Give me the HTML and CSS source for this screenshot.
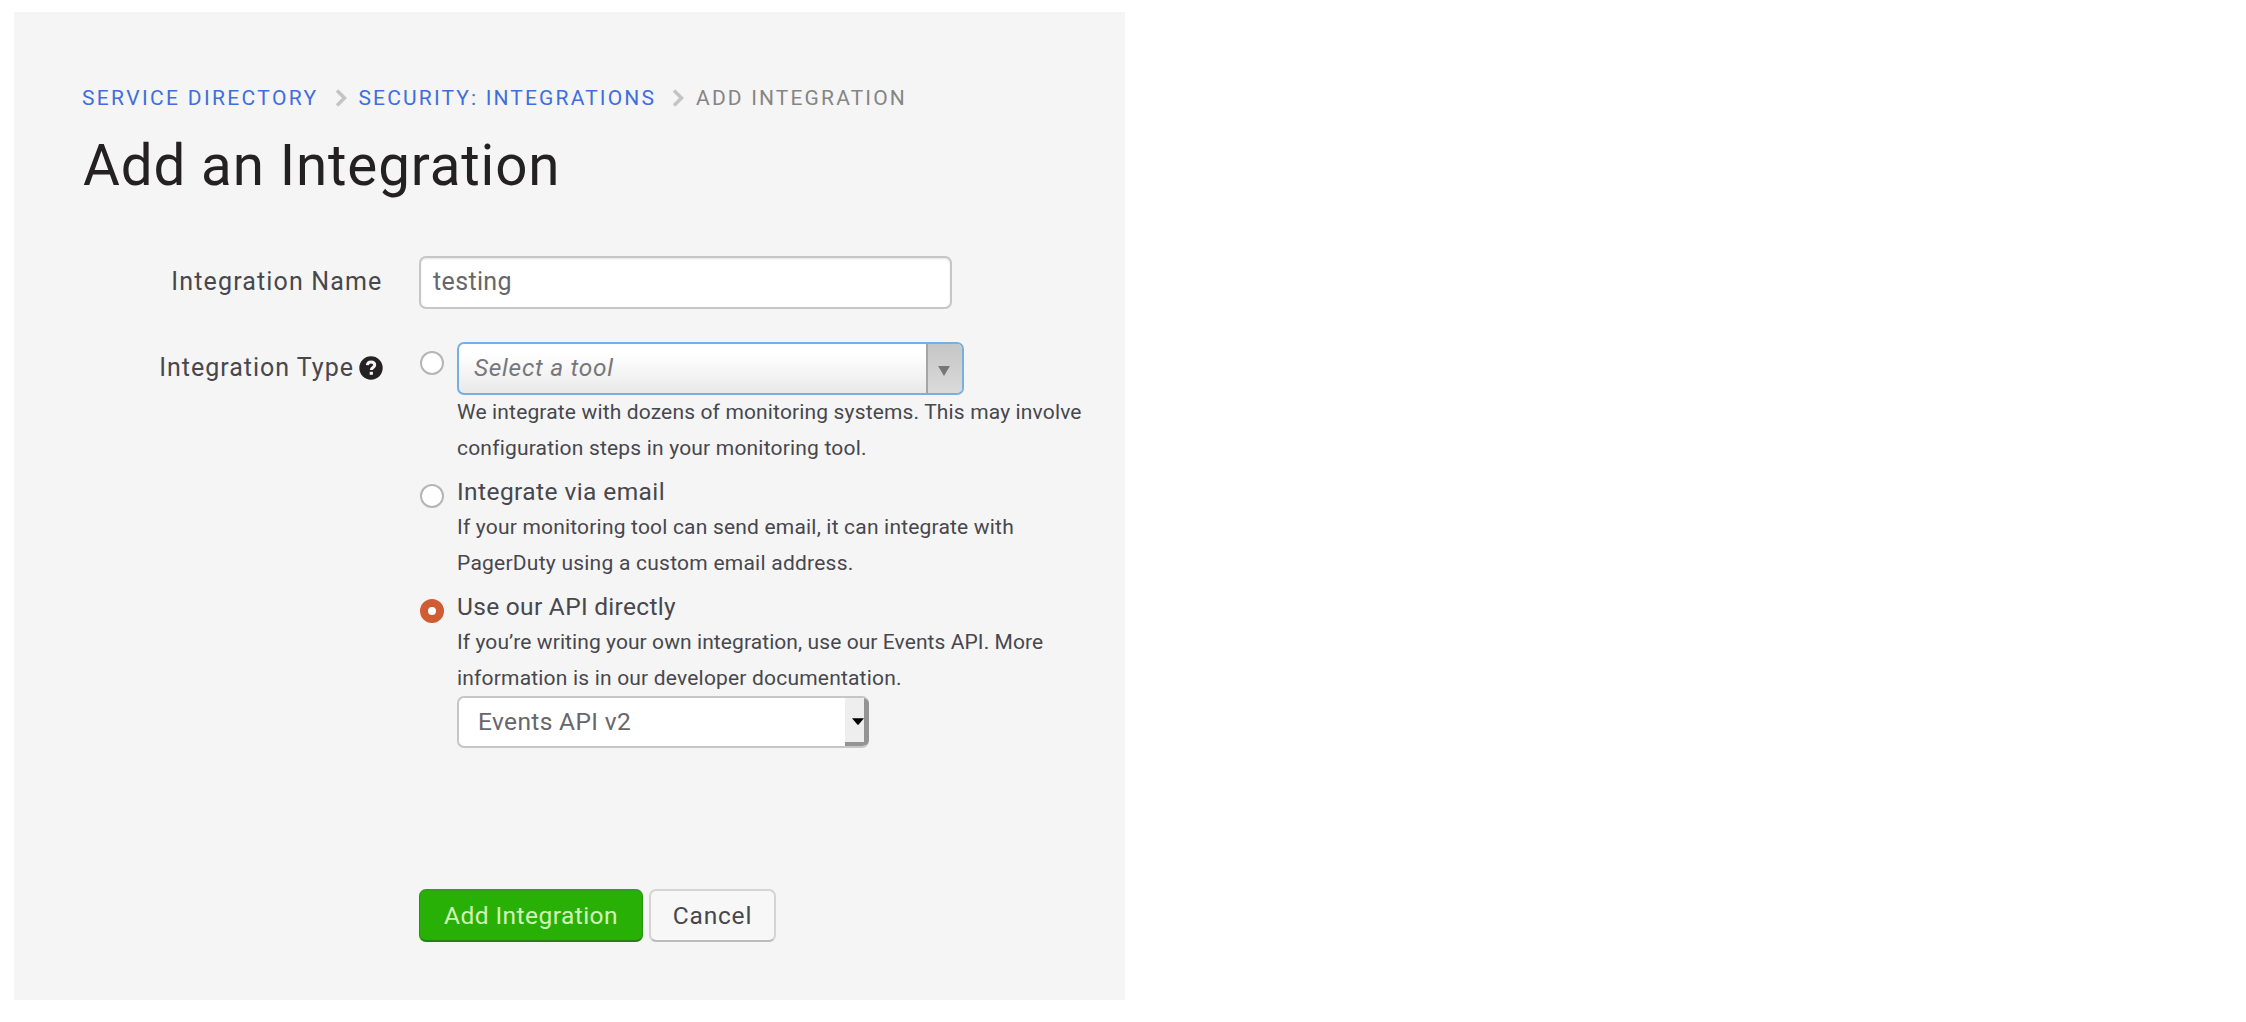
FILE: index.html
```html
<!DOCTYPE html>
<html lang="en">
<head>
<meta charset="utf-8">
<title>Add an Integration</title>
<link rel="stylesheet" href="styles.css">
</head>
<body>
<main class="panel">
  <nav class="crumbs">
    <a class="crumb crumb-a">SERVICE DIRECTORY</a>
    <svg class="chev" viewBox="0 0 12 18"><path d="M2 1.500 9.500 9 2 16.500"/></svg>
    <a class="crumb crumb-b">SECURITY: INTEGRATIONS</a>
    <svg class="chev" viewBox="0 0 12 18"><path d="M2 1.500 9.500 9 2 16.500"/></svg>
    <span class="crumb crumb-c">ADD INTEGRATION</span>
  </nav>
  <h1 class="title">Add an Integration</h1>
  <form class="form">
    <div class="row">
      <div class="label label-name"><span class="t-name">Integration Name</span></div>
      <div class="input"><span class="t-testing">testing</span></div>
    </div>
    <div class="row row-type">
      <div class="label"><span class="t-type">Integration Type</span>
        <svg class="help" viewBox="0 0 24 24"><circle cx="12" cy="12" r="11.700"/><path d="M8.300 9.200C8.500 6.900 10 5.900 12 5.900c2.200 0 3.700 1.200 3.700 3 0 2.500-3.400 2.600-3.400 5.100"/><rect x="10.700" y="15.800" width="3.200" height="3"/></svg>
      </div>
      <div class="options">
        <div class="option">
          <i class="radio radio-first"></i>
          <div>
            <div class="tool"><span class="tool-text"><span class="t-tool">Select a tool</span></span><span class="tool-arrow"><svg viewBox="0 0 13 11"><path d="M0 0h13L6.500 11z"/></svg></span></div>
            <p class="hint"><span class="h1">We integrate with dozens of monitoring systems. This may involve</span><br><span class="h2">configuration steps in your monitoring tool.</span></p>
          </div>
        </div>
        <div class="option">
          <i class="radio"></i>
          <div>
            <div class="name"><span class="t-email">Integrate via email</span></div>
            <p class="hint"><span class="h3">If your monitoring tool can send email, it can integrate with</span><br><span class="h4">PagerDuty using a custom email address.</span></p>
          </div>
        </div>
        <div class="option">
          <i class="radio radio-on"></i>
          <div>
            <div class="name"><span class="t-api">Use our API directly</span></div>
            <p class="hint"><span class="h5">If you’re writing your own integration, use our Events API. More</span><br><span class="h6">information is in our developer documentation.</span></p>
            <div class="select"><span class="t-events">Events API v2</span><span class="select-arrow"><svg viewBox="0 0 13 8"><path d="M0 0h13L6.500 7.500z"/></svg></span></div>
          </div>
        </div>
      </div>
    </div>
    <div class="actions">
      <button type="button" class="btn btn-add"><span class="t-add">Add Integration</span></button>
      <button type="button" class="btn btn-cancel"><span class="t-cancel">Cancel</span></button>
    </div>
  </form>
</main>
</body>
</html>
```
FILE: styles.css
```css
* { box-sizing: border-box; }
body { margin: 0; background: #fff; font-family: Roboto, sans-serif; color: #47474d; }
.panel { width: 1111px; height: 988px; margin: 12px 0 0 14px; padding: 70px 0 0 68px; background: #f5f5f5; white-space: nowrap; }
.crumbs { display: flex; align-items: center; height: 32px; font-size: 21px; line-height: 34px; }
.crumb { color: #3d6fe0; }
.crumb-a { letter-spacing: 2.35px; }
.crumb-b { letter-spacing: 2.15px; }
.crumb-c { letter-spacing: 2.15px; color: #858585; }
.chev { width: 12px; height: 18px; margin: 0 12px 0 16px; fill: none; stroke: #c4c4c4; stroke-width: 3.5; }
.title { margin: 17px 0 0 1px; font-size: 56.5px; line-height: 70px; font-weight: 400; letter-spacing: .87px; color: #242122; }
.form { margin-top: 55px; }
.row { display: grid; grid-template-columns: 300px 1fr; column-gap: 37px; font-size: 24px; }
.row-type { margin-top: 34px; }
.label { display: flex; justify-content: flex-end; align-items: center; gap: 5px; height: 49px; font-size: 25px; }
.label-name { height: 51px; }
.t-name { letter-spacing: 1.15px; margin-right: -.5px; }
.t-type { letter-spacing: 1px; margin-right: 0; }
.t-testing { position: relative; top: -1px; font-size: 25px; letter-spacing: .35px; }
.t-tool { font-size: 24.5px; letter-spacing: .7px; }
.t-email { font-size: 24.5px; letter-spacing: .42px; }
.t-api { font-size: 24.5px; letter-spacing: .3px; }
.t-events { font-size: 24.5px; letter-spacing: .36px; }
.t-add { font-size: 24.5px; letter-spacing: .44px; }
.t-cancel { font-size: 24.5px; letter-spacing: .8px; }
.h1 { letter-spacing: .15px; }
.h2, .h3, .h6 { letter-spacing: .19px; }
.h4 { letter-spacing: .24px; }
.h5 { letter-spacing: .08px; }
.help { width: 24px; height: 24px; margin-right: -1px; fill: #252223; }
.help path { fill: none; stroke: #f4f4f4; stroke-width: 3; }
.help rect { fill: #f4f4f4; }
.input { width: 533px; height: 53px; padding-left: 12px; line-height: 49px; background: #fff; border: 2px solid #c6c6c6; border-radius: 7px; color: #66666b; box-shadow: inset 0 1px 2px #e4e4e4; }
.options { padding-left: 1px; }
.option { display: grid; grid-template-columns: 24px 1fr; column-gap: 13px; margin-bottom: 9px; }
.radio { width: 24px; height: 24px; margin-top: 9px; border: 2px solid #b7b4b6; border-radius: 50%; background: #fff; }
.radio-first { margin-top: 8px; }
.radio-on { background: #fff; border: 8px solid #cf5c32; }
.tool { display: flex; width: 507px; height: 53px; margin: -1px 0 0; border: 2px solid #75b0e2; border-radius: 7px; overflow: hidden; background: linear-gradient(#fff 20%, #e9e9e9); }
.tool-text { flex: 1; padding-left: 15px; line-height: 48px; font-style: italic; color: #77777b; }
.tool-arrow { display: flex; align-items: center; justify-content: center; width: 36px; padding: 5px 2px 0 0; border-left: 2px solid #a5a5a5; background: linear-gradient(#c6c6c6, #dadada); }
.tool-arrow svg { width: 12px; height: 10px; fill: #777; }
.hint { margin: 0; font-size: 21px; line-height: 35.5px; }
.name { height: 35px; line-height: 34px; }
.select { display: flex; width: 412px; height: 52px; padding-left: 19px; border: 2px solid #c6c6c6; border-right: 0; border-radius: 7px; overflow: hidden; background: #fff; line-height: 48px; color: #66666b; }
.select-arrow { display: flex; align-items: center; justify-content: flex-end; width: 24px; margin-left: auto; background: #eee; border: solid #949494; border-width: 0 5px 4px 0; border-bottom-right-radius: 5px; }
.select-arrow svg { width: 12px; height: 8px; margin-top: 4px; fill: #000; }
.actions { display: flex; gap: 6px; margin: 132px 0 0 337px; }
.btn { height: 53px; padding: 0; border-radius: 7px; font: 24px/49px Roboto, sans-serif; }
.btn-add { width: 224px; color: #d3f3b9; background: #29b006; border: 1px solid #239308; border-top: 2px solid #30a01a; border-bottom: 2px solid #248011; }
.btn-cancel { width: 127px; color: #47474d; background: #f7f7f7; border: 2px solid #d5d3d4; border-bottom-color: #bbb; }
```
